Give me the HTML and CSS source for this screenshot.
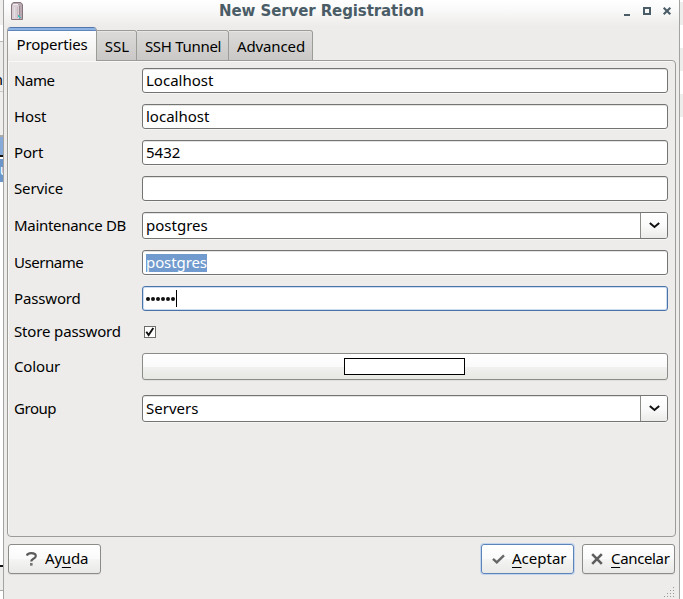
FILE: index.html
```html
<!DOCTYPE html>
<html lang="en">
<head>
<meta charset="utf-8">
<title>New Server Registration</title>
<link rel="stylesheet" href="styles.css">
</head>
<body>
<div class="desktop">
  <div class="behind-left">
    <i class="l1"></i><i class="l2"></i><i class="l3"><span>n</span></i><i class="l4"></i><i class="l5"></i><i class="l6"></i><i class="l7"><span>u</span></i><i class="l8"></i><i class="l9"></i><i class="l10"></i>
  </div>
  <main class="window">
    <header class="titlebar">
      <svg class="app-icon" width="12" height="18" viewBox="0 0 12 18">
        <path d="M0.5 3Q1 .5 3 .5H9Q11 .5 11.5 3V17.5H.5Z" fill="#b8a9b0" stroke="#86757d"/>
        <path d="M1 3.5Q4 1 8 3.5V17H1Z" fill="#d8ced3"/>
        <path d="M3.5 5V16" stroke="#e6dfe3"/>
        <path d="M6.5 5V16" stroke="#c6b8bf"/>
        <path d="M2 2.5H7" stroke="#f2edf0"/>
        <path d="M8.5 4V17" stroke="#9a8791"/>
        <path d="M7 13h1v1h1v1h1v1H8v-1H7z" fill="#3fc1c4"/>
      </svg>
      <h1 class="title">New Server Registration</h1>
      <svg class="controls" width="49" height="10" viewBox="0 0 49 10">
        <path d="M1 9H7" stroke="#4a5c66" stroke-width="2"/>
        <rect x="21" y="2" width="6" height="6" fill="none" stroke="#4a5c66" stroke-width="2"/>
        <path d="M40.7 1.7L47.3 8.3M47.3 1.7L40.7 8.3" stroke="#4a5c66" stroke-width="2.1"/>
      </svg>
    </header>
    <nav class="tabs">
      <span class="tab active"><b class="t-properties">Properties</b></span>
      <span class="tab ssl"><b>SSL</b></span>
      <span class="tab ssh"><b class="t-ssh">SSH Tunnel</b></span>
      <span class="tab adv"><b class="t-adv">Advanced</b></span>
    </nav>
    <section class="panel">
      <label class="tight">Name</label><div class="field"><span>Localhost</span></div>
      <label>Host</label><div class="field"><span>localhost</span></div>
      <label>Port</label><div class="field"><span>5432</span></div>
      <label>Service</label><div class="field"></div>
      <label class="t-maint">Maintenance DB</label>
      <div class="field combo"><span>postgres</span><div class="arrow"><svg width="11" height="7" viewBox="0 0 11 7"><path d="M.8 1L5.5 5L10.2 1" fill="none" stroke="#111" stroke-width="2"/></svg></div></div>
      <label class="tight">Username</label><div class="field"><span class="selected">postgres</span></div>
      <label>Password</label><div class="field focused"><span class="dots"><i></i><i></i><i></i><i></i><i></i><i></i></span><span class="caret"></span></div>
      <label>Store password</label>
      <div class="check"><svg width="12" height="12" viewBox="0 0 12 12"><rect x=".5" y=".5" width="11" height="11" fill="#fff" stroke="#6c6c69"/><path d="M2.3 5.8L4.6 9L9.3 2" fill="none" stroke="#111" stroke-width="1.9"/></svg></div>
      <label>Colour</label><div class="colour"><div class="swatch"></div></div>
      <label class="group tight">Group</label>
      <div class="field combo group"><span>Servers</span><div class="arrow"><svg width="11" height="7" viewBox="0 0 11 7"><path d="M.8 1L5.5 5L10.2 1" fill="none" stroke="#111" stroke-width="2"/></svg></div></div>
    </section>
    <footer class="actions">
      <div class="button help"><svg width="11" height="14" viewBox="0 0 11 14"><path d="M.8 3.6Q1.5 1.2 5.2 1.2Q9.8 1.2 9.8 4Q9.8 5.5 7.4 6.8Q5.2 8 5.2 9.5" fill="none" stroke="#5b5b5b" stroke-width="2.2"/><path d="M4 11h2.6v2.7H4z" fill="#777"/></svg><span>Ay<u>u</u>da</span></div>
      <div class="button default"><svg width="13" height="10" viewBox="0 0 13 10"><path d="M1 4.8L4.8 8.3L12 1.3" fill="none" stroke="#666" stroke-width="2.4"/></svg><span><u>A</u>ceptar</span></div>
      <div class="button cancel"><svg width="12" height="12" viewBox="0 0 12 12"><path d="M1.2 1.2L10.8 10.8M10.8 1.2L1.2 10.8" stroke="#5e5e5e" stroke-width="2.6"/></svg><span><u>C</u>ancelar</span></div>
    </footer>
    <svg class="grip" width="12" height="12" viewBox="0 0 12 12"><path d="M10 1.5h1M7 4.5h1M10 4.5h1M4 7.5h1M7 7.5h1M10 7.5h1M1 10.5h1M4 10.5h1M7 10.5h1M10 10.5h1" stroke="#999"/></svg>
  </main>
  <div class="behind-right"></div>
</div>
</body>
</html>
```
FILE: styles.css
```css
* { box-sizing: border-box; }
body {
  margin: 0;
  overflow: hidden;
  font: 15px/20px "Noto Sans", "Open Sans", sans-serif;
  color: #000;
}
.desktop { display: flex; width: 683px; height: 599px; background: #fff; }

.behind-left { width: 3px; display: flex; flex-direction: column; overflow: hidden; }
.behind-left i { display: flex; flex: none; justify-content: flex-end; font-style: normal; overflow: hidden; }
.l1 { height: 25px; background: #f0efee; }
.l2 { height: 17px; background: #fff; border-bottom: 1px solid #b8b8b8; }
.l3 { height: 50px; background: #ededec; border-bottom: 1px solid #c8c8c8; padding-top: 27px; }
.l4 { height: 45px; background: #f0efee; border-bottom: 2px solid #aaa; }
.l5 { height: 20px; background: #86abd9; border-bottom: 2px solid #111; }
.l6 { height: 2px; background: #fff; }
.l7 { height: 23px; background: #6c95ca; color: #fff; }
.l7 span { margin-right: -6px; }
.l8 { height: 383px; background: #fff; }
.l9 { height: 26px; background: #ededec; border-top: 2px solid #111; border-bottom: 1px solid #aaa; }
.l10 { height: 8px; background: #fff; }
.behind-right {
  width: 3px;
  background: linear-gradient(#fff 2px, #ededec 2px 25px, #fff 25px 48px, #ededec 48px 71px, #fff 71px 94px, #ededec 94px 117px, #fff 117px);
}

.window {
  position: relative;
  width: 677px;
  height: 599px;
  border: solid #a3a3a1;
  border-width: 0 1px;
  background: #edecea;
}
.titlebar {
  display: flex;
  height: 27px;
  padding: 2px 7px 0 8px;
  background: linear-gradient(#fff 0, #fbfbfb 8px, #edecea 26px);
}
.app-icon { flex: none; margin-left: -1px; }
.title {
  flex: 1;
  margin: -1px 0 0;
  padding-right: 3px;
  text-align: center;
  color: #4a5c66;
  font: bold 15px/20px "DejaVu Sans", sans-serif;
  letter-spacing: -0.1px;
  white-space: nowrap;
}
.controls { flex: none; margin-top: 4px; }

.tabs { display: flex; align-items: flex-end; height: 34px; padding-left: 3px; position: relative; }
.tab {
  height: 31px;
  border: 1px solid #9b9b98;
  border-left: 0;
  border-radius: 0 3px 0 0;
  background: linear-gradient(#dcdbd9, #c9c8c6);
  box-shadow: inset 0 1px #e7e6e4;
  padding: 5px 0 0;
  text-align: center;
  white-space: nowrap;
}
.tab b { font-weight: 400; display: inline-block; }
.tab.active {
  width: 90px;
  height: 34px;
  border: solid #9b9b98;
  border-width: 0 1px;
  border-radius: 4px 4px 0 0;
  background: linear-gradient(#4f77ad 1px, #8fb3e2 1px 3px, #6087bb 3px 4px, #fff 4px, #edecea);
  box-shadow: none;
  padding-top: 7px;
}
.t-properties { letter-spacing: -0.2px; }
.ssl { width: 40px; padding-left: 1px; }
.ssh { width: 92px; }
.t-ssh { letter-spacing: -0.3px; padding-left: 1px; }
.adv { width: 84px; }
.t-adv { letter-spacing: -0.1px; padding-left: 1px; }

.panel {
  display: grid;
  grid-template-columns: 128px 526px;
  grid-template-rows: repeat(4, 25px) 27px 25px 25px 20px 27px 31px;
  row-gap: 11px;
  width: 669px;
  height: 477px;
  margin: -1px 0 0 3px;
  padding: 7px 0 0 6px;
  border: 1px solid #9b9b98;
  border-radius: 0 4px 4px 4px;
  box-shadow: inset 1px 1px #f8f8f7;
  align-content: start;
}
.panel label { align-self: center; line-height: 20px; padding-bottom: 2px; white-space: nowrap; letter-spacing: -0.15px; }
.panel .tight { letter-spacing: -0.45px; }
.panel .t-maint { letter-spacing: -0.3px; }
.field {
  display: flex;
  align-items: center;
  padding-left: 3px;
  border: 1px solid #747472;
  border-radius: 3px;
  background: #fff;
  box-shadow: inset 0 1px #e4e4e2, 0 1px #f5f5f4;
  overflow: hidden;
}
.field > span:first-child:not(.dots) { margin-bottom: 2px; }
.field > span.selected:first-child { margin-bottom: 0; background: #719bce; color: #fff; height: 18px; line-height: 16px; letter-spacing: -0.1px; }
.focused { border-color: #4a73aa; box-shadow: inset 0 0 0 1px #ccdcf1; }
.dots { display: flex; gap: 1px; }
.dots i { width: 4px; height: 4px; border-radius: 2px; background: #111; }
.caret { width: 1px; height: 17px; margin-left: 1px; background: #000; }
.arrow {
  width: 27px;
  height: 25px;
  margin-left: auto;
  border-left: 1px solid #8b8b88;
  background: linear-gradient(#fff, #fafafa 50%, #ebebe9);
  display: flex;
  align-items: center;
  justify-content: center;
}
.check { display: flex; align-items: center; padding-left: 2px; }
.colour {
  display: flex;
  align-items: center;
  justify-content: center;
  border: 1px solid #8b8b88;
  border-radius: 3px;
  background: linear-gradient(#fff, #fafafa 50%, #f1f1ef 52%, #e7e7e4);
  box-shadow: 0 1px #e0dfdd;
}
.swatch { width: 121px; height: 17px; border: 1px solid #000; background: #fff; margin-right: 1px; }
.group { margin-top: 4px; }

.actions { display: flex; gap: 8px; padding: 7px 4px 0; }
.button {
  display: flex;
  align-items: center;
  width: 93px;
  height: 30px;
  border: 1px solid #8b8b88;
  border-radius: 3px;
  background: linear-gradient(#fff, #fafafa 50%, #f4f4f3 52%, #e9e9e7);
  box-shadow: 0 1px #dcdbd9;
}
.button svg { flex: none; }
.button span { margin-bottom: 2px; }
.help { margin-right: auto; padding-left: 17px; }
.help span { margin-left: 8px; letter-spacing: -0.2px; }
.default { border-color: #5d84b9; box-shadow: 0 0 0 1px #c3d5ed; padding-left: 10px; }
.default span { margin-left: 7px; }
.cancel { padding-left: 8px; }
.cancel span { margin-left: 8px; letter-spacing: -0.35px; }
.button u { text-underline-offset: 3px; text-decoration-thickness: 1px; text-decoration-skip-ink: none; }
.grip { position: absolute; right: 4px; bottom: 1px; }
```
